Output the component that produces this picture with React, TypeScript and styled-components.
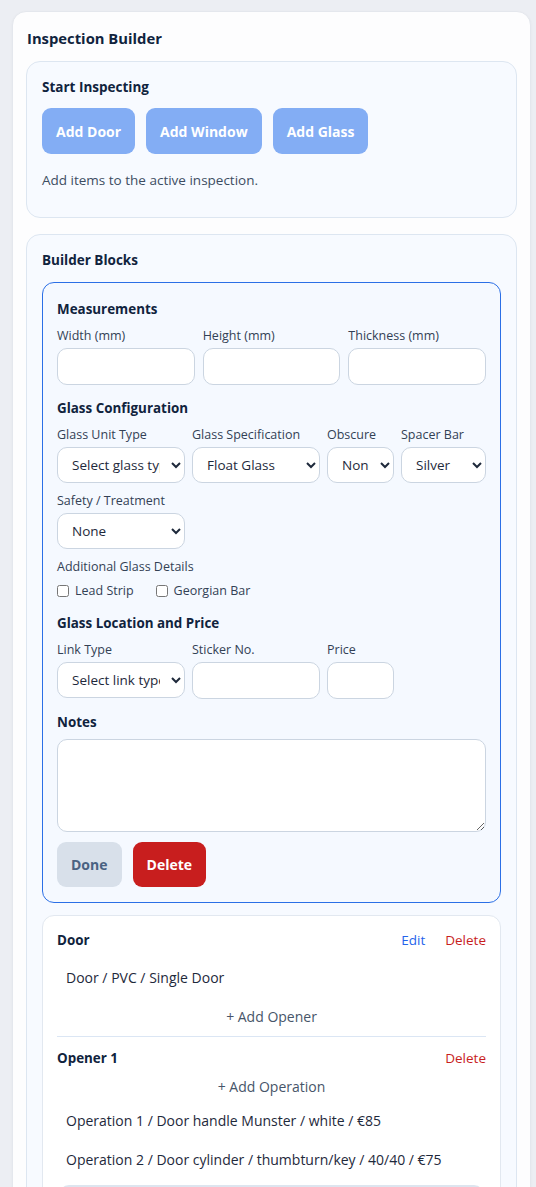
import React from "react";
import styled, { createGlobalStyle } from "styled-components";

/* ------------------------------------------------------------------ */
/*  Global                                                             */
/* ------------------------------------------------------------------ */

const GlobalStyle = createGlobalStyle`
  * { box-sizing: border-box; }
  body {
    margin: 0;
    background: #eceef3;
    font-family: "Open Sans", "Noto Sans", "Liberation Sans", sans-serif;
    color: #10233d;
  }
`;

/* ------------------------------------------------------------------ */
/*  Layout                                                             */
/* ------------------------------------------------------------------ */

const Page = styled.div`
  padding: 11px 5px 0 12px;
`;

const Card = styled.div`
  background: #fdfdfe;
  border: 1px solid #e4e7ed;
  border-radius: 14px;
  padding: 16px 13px 20px;
  display: flex;
  flex-direction: column;
  gap: 16px;
  box-shadow: 0 1px 3px rgba(15, 23, 42, 0.04);
`;

const CardTitle = styled.h2`
  margin: 0 0 -3px 1px;
  font-size: 14.8px;
  line-height: 20px;
  font-weight: 700;
  color: #10233d;
`;

const Section = styled.section`
  background: #f7faff;
  border: 1px solid #dde6f1;
  border-radius: 14px;
  padding: 15px 15px 27px;
  display: flex;
  flex-direction: column;
`;

const SectionTitle = styled.h3`
  margin: 0;
  font-size: 13.5px;
  line-height: 20px;
  font-weight: 700;
  color: #10233d;
`;

const ButtonRow = styled.div`
  display: flex;
  gap: 11px;
  margin-top: 11px;
`;

const AddButton = styled.button`
  height: 46px;
  padding: 0 14px;
  border: none;
  border-radius: 9px;
  background: #83adf4;
  color: #fff;
  font-family: inherit;
  font-size: 14px;
  font-weight: 700;
`;

const Help = styled.p`
  margin: 16px 0 0;
  font-size: 13.5px;
  line-height: 20px;
  color: #3d4d62;
`;

/* ------------------------------------------------------------------ */
/*  Builder block form                                                 */
/* ------------------------------------------------------------------ */

const BlockList = styled.div`
  margin-top: 12px;
  display: flex;
  flex-direction: column;
  gap: 12px;
`;

const ActiveBlock = styled.div`
  background: #f5f9ff;
  border: 1px solid #2b6fe6;
  border-radius: 12px;
  padding: 17px 14px 15px;
  display: flex;
  flex-direction: column;
  gap: 14px;
`;

const Group = styled.div<{ $gap?: number }>`
  display: flex;
  flex-direction: column;
  gap: ${(p) => p.$gap ?? 9}px;
`;

const GroupTitle = styled.h4`
  margin: 0;
  font-size: 13.4px;
  line-height: 18px;
  font-weight: 700;
  color: #10233d;
`;

const Rows = styled.div`
  display: flex;
  flex-direction: column;
  gap: 10px;
`;

const ThreeCols = styled.div`
  display: grid;
  grid-template-columns: repeat(3, 1fr);
  gap: 8px;
`;

const FourCols = styled.div`
  display: grid;
  grid-template-columns: 128px 128px 67px 1fr;
  gap: 7px;
`;

const Field = styled.label`
  display: flex;
  flex-direction: column;
  gap: 4px;
  min-width: 0;
`;

const FieldLabel = styled.span`
  font-size: 12.5px;
  line-height: 16px;
  color: #334155;
  white-space: nowrap;
`;

const TextInput = styled.input`
  height: 37px;
  width: 100%;
  border: 1px solid #cbd5e1;
  border-radius: 10px;
  background: #fff;
  font-family: inherit;
  font-size: 13.5px;
  padding: 0 10px;
`;

const Select = styled.select`
  height: 36px;
  width: 100%;
  border: 1px solid #cbd5e1;
  border-radius: 10px;
  background: #fff;
  font-family: inherit;
  font-size: 13.5px;
  color: #1e293b;
  padding: 0 8px 0 10px;
`;

const CheckRow = styled.div`
  display: flex;
  gap: 22px;
`;

const Check = styled.label`
  display: flex;
  align-items: center;
  gap: 6px;
  font-size: 12.5px;
  line-height: 18px;
  color: #334155;

  input {
    margin: 0;
    width: 12px;
    height: 12px;
  }
`;

const Notes = styled.textarea`
  height: 93px;
  border: 1px solid #cbd5e1;
  border-radius: 10px;
  background: #fff;
  resize: vertical;
  font-family: inherit;
`;

const Actions = styled.div`
  display: flex;
  gap: 11px;
  margin-top: -4px;
`;

const ActionButton = styled.button<{ $variant: "muted" | "danger" }>`
  height: 45px;
  padding: 0 14px;
  border: none;
  border-radius: 9px;
  font-family: inherit;
  font-size: 14px;
  font-weight: 700;
  background: ${(p) => (p.$variant === "danger" ? "#c81e1e" : "#d8e0ea")};
  color: ${(p) => (p.$variant === "danger" ? "#fff" : "#4a6282")};
`;

/* ------------------------------------------------------------------ */
/*  Saved item card                                                    */
/* ------------------------------------------------------------------ */

const ItemCard = styled.div`
  background: #fff;
  border: 1px solid #e2e8f0;
  border-radius: 12px;
  padding: 15px 14px 0;
  display: flex;
  flex-direction: column;
`;

const ItemHeader = styled.div`
  display: flex;
  align-items: center;
  justify-content: space-between;
  height: 18px;
`;

const ItemTitle = styled.span`
  font-size: 13.4px;
  font-weight: 700;
  color: #10233d;
`;

const LinkRow = styled.div`
  display: flex;
  gap: 20px;
`;

const LinkButton = styled.button<{ $tone: "blue" | "red" }>`
  border: none;
  background: none;
  padding: 0;
  font-family: inherit;
  font-size: 13.5px;
  color: ${(p) => (p.$tone === "blue" ? "#2563eb" : "#c81e1e")};
`;

const Summary = styled.div`
  padding: 9px 9px;
  font-size: 14px;
  line-height: 20px;
  color: #1e293b;
`;

const ItemSummary = styled(Summary)`
  margin-top: 10px;
`;

const AddLink = styled.button`
  align-self: center;
  border: none;
  background: none;
  padding: 6px 0;
  margin-top: 4px;
  font-family: inherit;
  font-size: 14px;
  line-height: 20px;
  color: #475569;
`;

const Opener = styled.div`
  border-top: 1px solid #dbe6f4;
  margin-top: 3px;
  padding-top: 12px;
  display: flex;
  flex-direction: column;
`;

const OperationList = styled.div`
  margin-top: -1px;
  display: flex;
  flex-direction: column;
  gap: 1px;
`;

const PendingRow = styled.div`
  margin: 6px 2px 0;
  height: 40px;
  border-radius: 10px;
  background: #dde5ef;
`;

/* ------------------------------------------------------------------ */
/*  App                                                                */
/* ------------------------------------------------------------------ */

export default function App() {
  return (
    <>
      <GlobalStyle />
      <Page>
        <Card>
          <CardTitle>Inspection Builder</CardTitle>

          <Section>
            <SectionTitle>Start Inspecting</SectionTitle>
            <ButtonRow>
              <AddButton>Add Door</AddButton>
              <AddButton>Add Window</AddButton>
              <AddButton>Add Glass</AddButton>
            </ButtonRow>
            <Help>Add items to the active inspection.</Help>
          </Section>

          <Section>
            <SectionTitle>Builder Blocks</SectionTitle>
            <BlockList>
              <ActiveBlock>
                <Group $gap={10}>
                  <GroupTitle>Measurements</GroupTitle>
                  <ThreeCols>
                    <Field>
                      <FieldLabel>Width (mm)</FieldLabel>
                      <TextInput />
                    </Field>
                    <Field>
                      <FieldLabel>Height (mm)</FieldLabel>
                      <TextInput />
                    </Field>
                    <Field>
                      <FieldLabel>Thickness (mm)</FieldLabel>
                      <TextInput />
                    </Field>
                  </ThreeCols>
                </Group>

                <Group $gap={10}>
                  <GroupTitle>Glass Configuration</GroupTitle>
                  <Rows>
                    <FourCols>
                      <Field>
                        <FieldLabel>Glass Unit Type</FieldLabel>
                        <Select defaultValue="">
                          <option value="">Select glass type</option>
                        </Select>
                      </Field>
                      <Field>
                        <FieldLabel>Glass Specification</FieldLabel>
                        <Select defaultValue="float">
                          <option value="float">Float Glass</option>
                        </Select>
                      </Field>
                      <Field>
                        <FieldLabel>Obscure</FieldLabel>
                        <Select defaultValue="none">
                          <option value="none">None</option>
                        </Select>
                      </Field>
                      <Field>
                        <FieldLabel>Spacer Bar</FieldLabel>
                        <Select defaultValue="silver">
                          <option value="silver">Silver</option>
                        </Select>
                      </Field>
                    </FourCols>
                    <FourCols>
                      <Field>
                        <FieldLabel>Safety / Treatment</FieldLabel>
                        <Select defaultValue="none">
                          <option value="none">None</option>
                        </Select>
                      </Field>
                    </FourCols>
                    <Group $gap={7}>
                      <FieldLabel>Additional Glass Details</FieldLabel>
                      <CheckRow>
                        <Check>
                          <input type="checkbox" /> Lead Strip
                        </Check>
                        <Check>
                          <input type="checkbox" /> Georgian Bar
                        </Check>
                      </CheckRow>
                    </Group>
                  </Rows>
                </Group>

                <Group $gap={10}>
                  <GroupTitle>Glass Location and Price</GroupTitle>
                  <FourCols>
                    <Field>
                      <FieldLabel>Link Type</FieldLabel>
                      <Select defaultValue="">
                        <option value="">Select link type</option>
                      </Select>
                    </Field>
                    <Field>
                      <FieldLabel>Sticker No.</FieldLabel>
                      <TextInput />
                    </Field>
                    <Field>
                      <FieldLabel>Price</FieldLabel>
                      <TextInput />
                    </Field>
                  </FourCols>
                </Group>

                <Group $gap={8}>
                  <GroupTitle>Notes</GroupTitle>
                  <Notes />
                </Group>

                <Actions>
                  <ActionButton $variant="muted">Done</ActionButton>
                  <ActionButton $variant="danger">Delete</ActionButton>
                </Actions>
              </ActiveBlock>

              <ItemCard>
                <ItemHeader>
                  <ItemTitle>Door</ItemTitle>
                  <LinkRow>
                    <LinkButton $tone="blue">Edit</LinkButton>
                    <LinkButton $tone="red">Delete</LinkButton>
                  </LinkRow>
                </ItemHeader>
                <ItemSummary>Door / PVC / Single Door</ItemSummary>
                <AddLink>+ Add Opener</AddLink>

                <Opener>
                  <ItemHeader>
                    <ItemTitle>Opener 1</ItemTitle>
                    <LinkButton $tone="red">Delete</LinkButton>
                  </ItemHeader>
                  <AddLink>+ Add Operation</AddLink>
                  <OperationList>
                    <Summary>Operation 1 / Door handle Munster / white / €85</Summary>
                    <Summary>
                      Operation 2 / Door cylinder / thumbturn/key / 40/40 / €75
                    </Summary>
                  </OperationList>
                  <PendingRow />
                </Opener>
              </ItemCard>
            </BlockList>
          </Section>
        </Card>
      </Page>
    </>
  );
}
